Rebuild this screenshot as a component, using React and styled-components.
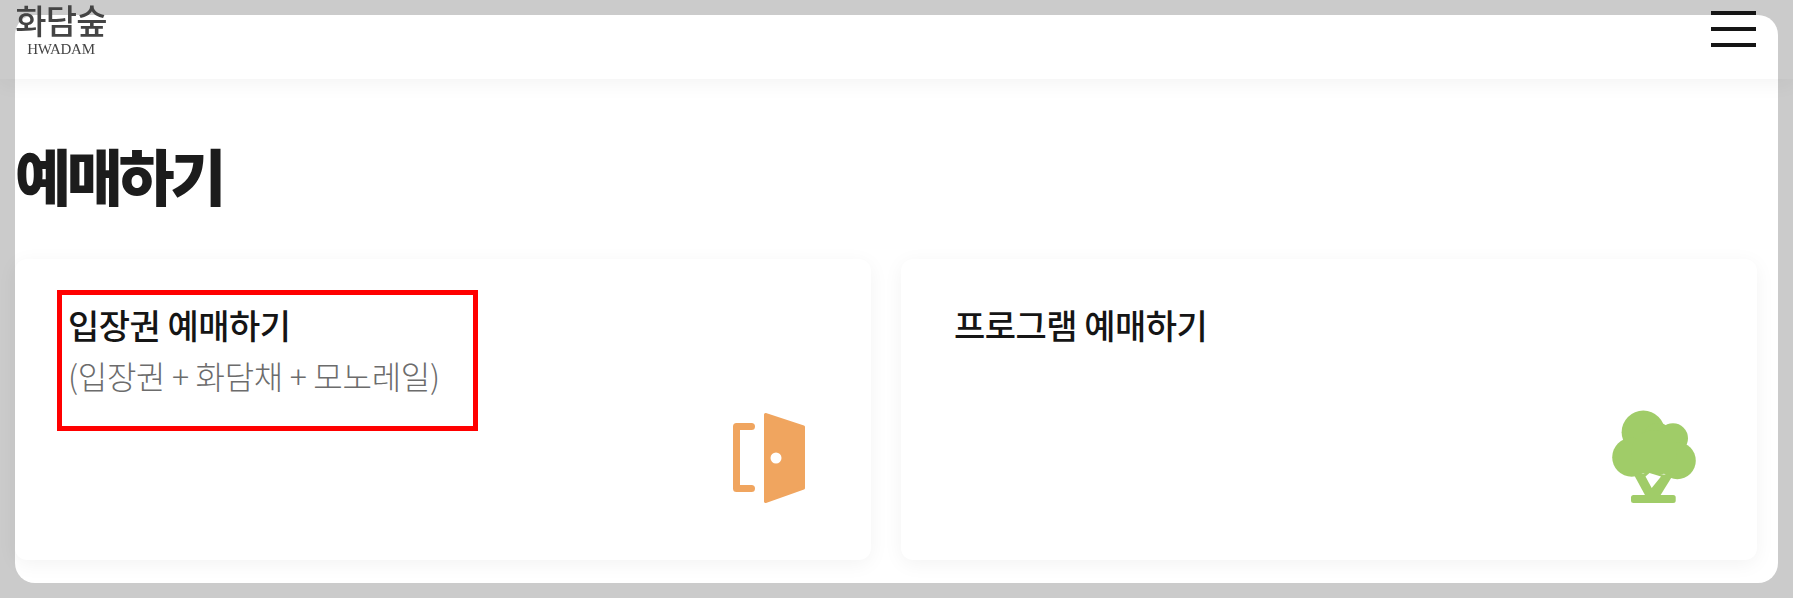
import React from 'react';
import styled, { createGlobalStyle } from 'styled-components';

const GlobalStyle = createGlobalStyle`
  html, body {
    margin: 0;
    height: 598px;
    overflow: hidden;
    background: #cbcbcb;
    font-family: "Noto Sans CJK KR", "Noto Sans", sans-serif;
  }
`;

const Sheet = styled.div`
  position: relative;
  box-sizing: border-box;
  margin: 15px;
  height: 568px;
  padding: 126px 22px 0 0;
  background: #fff;
  border-radius: 20px;
  display: flex;
  flex-direction: column;
`;

const Header = styled.header`
  position: absolute;
  top: -15px;
  left: -15px;
  right: -15px;
  height: 79px;
  box-shadow: 0 4px 20px rgba(0, 0, 0, 0.05);
  display: flex;
  justify-content: space-between;
  align-items: flex-start;
  padding: 0 37px 0 15px;
  box-sizing: border-box;
`;

const Logo = styled.div`
  display: flex;
  flex-direction: column;
  align-items: center;
  width: 92px;
  padding-top: 1px;
  color: #444;
  filter: blur(0.4px);
`;

const LogoMark = styled.div`
  font-size: 34px;
  line-height: 38px;
  font-weight: 500;
  letter-spacing: -0.8px;
  white-space: nowrap;
`;

const LogoSub = styled.div`
  font-family: "Liberation Serif", serif;
  font-size: 15px;
  line-height: 14px;
  margin-top: 3px;
  letter-spacing: -0.3px;
`;

const Burger = styled.div`
  width: 45px;
  padding-top: 11px;
  display: flex;
  flex-direction: column;
  gap: 12px;
`;

const BurgerLine = styled.span`
  display: block;
  height: 4px;
  background: #151515;
`;

const Title = styled.h1`
  margin: 0 0 50px;
  font-size: 61px;
  line-height: 68px;
  font-weight: 900;
  letter-spacing: -4.4px;
  color: #1c1c1c;
`;

const Cards = styled.div`
  display: grid;
  grid-template-columns: 856px 856px;
  gap: 30px;
`;

const Card = styled.section`
  position: relative;
  box-sizing: border-box;
  height: 301px;
  padding: 43px 50px 50px 53px;
  background: #fff;
  border-radius: 12px;
  box-shadow: 0 4px 20px rgba(0, 0, 0, 0.05);
  display: flex;
  flex-direction: column;
`;

const CardTitle = styled.h2`
  margin: 0;
  font-size: 34px;
  line-height: 46px;
  font-weight: 500;
  letter-spacing: -0.5px;
  color: #151515;
`;

const CardSub = styled.p`
  margin: 4px 0 0;
  font-size: 32px;
  line-height: 46px;
  font-weight: 300;
  letter-spacing: -0.3px;
  color: #6c6c6c;
`;

const Highlight = styled.div`
  position: absolute;
  left: 42px;
  top: 31px;
  width: 421px;
  height: 141px;
  box-sizing: border-box;
  border: 5px solid #ff0000;
`;

const IconBox = styled.svg`
  display: block;
  width: 100px;
  height: 104px;
  margin-top: auto;
  align-self: flex-end;
`;

const DoorIcon = () => (
  <IconBox viewBox="0 0 100 104">
    <path d="M30.5 20.5H15.5V82.5H30.5" fill="none" stroke="#f0a55f" strokeWidth="7" strokeLinecap="round" strokeLinejoin="round" />
    <path d="M44.5 8.5L82.5 21V82L44.5 95.5Z" fill="#f0a55f" stroke="#f0a55f" strokeWidth="3" strokeLinejoin="round" />
    <circle cx="55" cy="52" r="5.5" fill="#fff" />
  </IconBox>
);

const TreeIcon = () => (
  <IconBox viewBox="1 1 100 104">
    <g fill="#a0cc68">
      <circle cx="37.3" cy="27.3" r="21.7" />
      <circle cx="52" cy="33" r="15" />
      <circle cx="67" cy="33.3" r="15" />
      <circle cx="25.7" cy="52.3" r="19.5" />
      <circle cx="71.3" cy="55.7" r="18.5" />
      <circle cx="48" cy="48" r="23" />
      <path d="M27 68L67 70L54 91H39.5Z" />
      <rect x="25" y="90" width="44.7" height="8" rx="2.5" />
    </g>
    <path d="M39.5 71.5L43.5 68L55 71.5L45.7 83Z" fill="#fff" />
  </IconBox>
);

export default function App() {
  return (
    <>
      <GlobalStyle />
      <Sheet>
        <Header>
          <Logo>
            <LogoMark>화담숲</LogoMark>
            <LogoSub>HWADAM</LogoSub>
          </Logo>
          <Burger>
            <BurgerLine />
            <BurgerLine />
            <BurgerLine />
          </Burger>
        </Header>
        <Title>예매하기</Title>
        <Cards>
          <Card>
            <CardTitle>입장권 예매하기</CardTitle>
            <CardSub>(입장권 + 화담채 + 모노레일)</CardSub>
            <Highlight />
            <DoorIcon />
          </Card>
          <Card>
            <CardTitle>프로그램 예매하기</CardTitle>
            <TreeIcon />
          </Card>
        </Cards>
      </Sheet>
    </>
  );
}
